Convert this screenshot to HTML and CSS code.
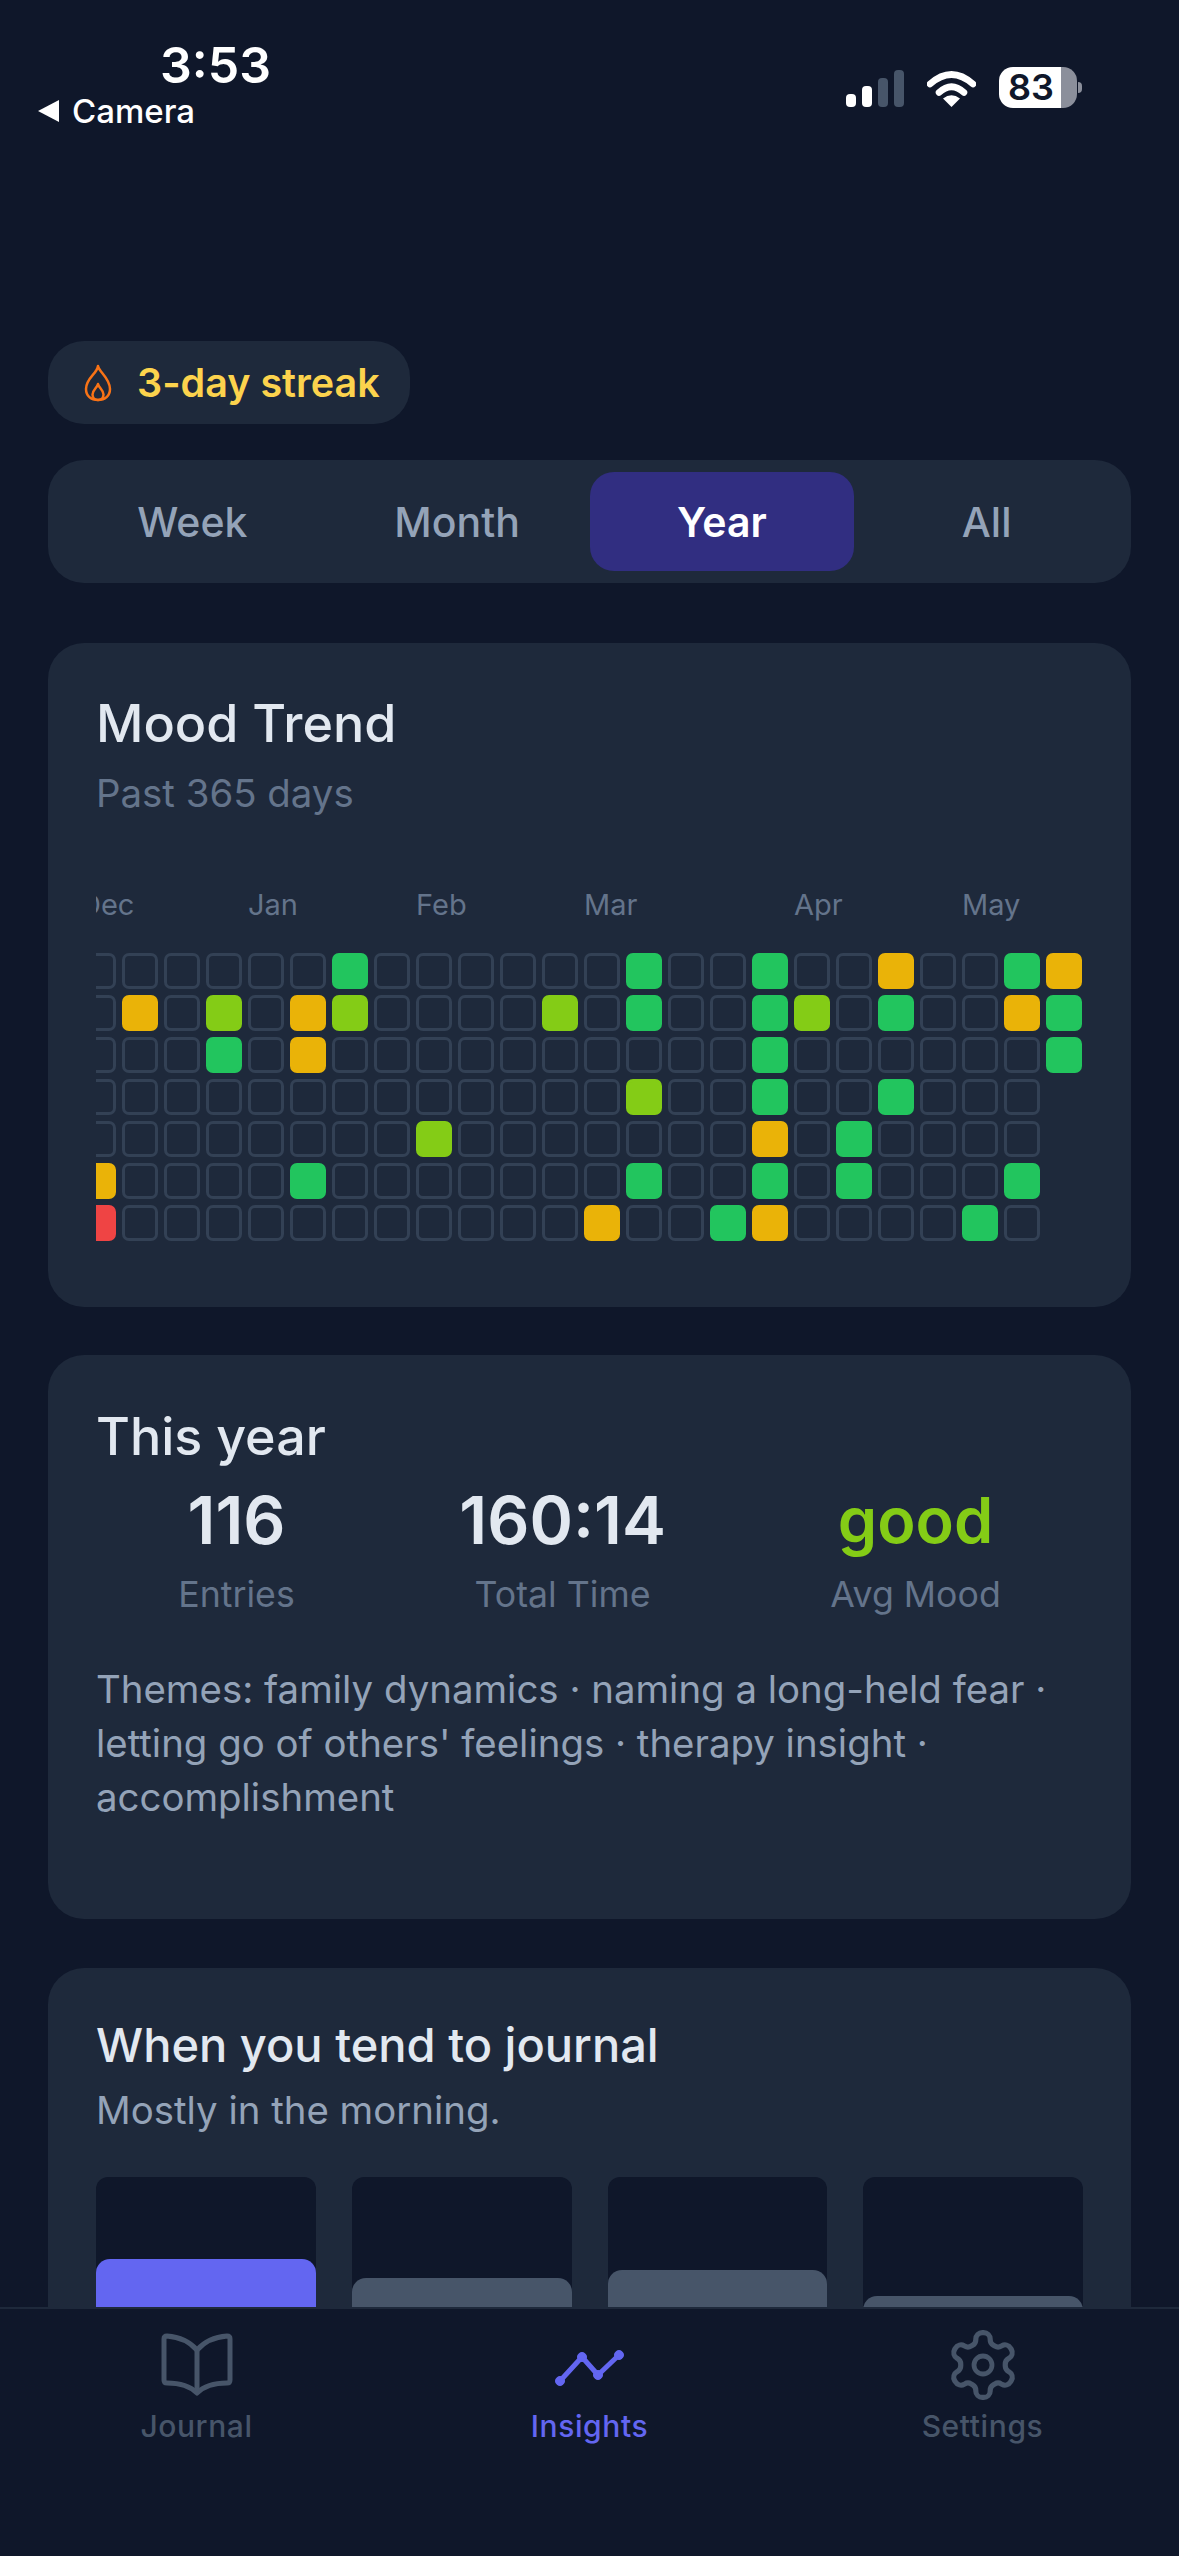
FILE: index.html
```html
<!DOCTYPE html>
<html lang="en">
<head>
<meta charset="utf-8">
<title>Insights</title>
<link rel="stylesheet" href="styles.css">
</head>
<body>
<div class="app">
  <header class="status">
    <div class="status-left">
      <div class="time">3:53</div>
      <div class="back"><span class="back-arrow"></span><span>Camera</span></div>
    </div>
    <div class="status-right">
      <div class="signal"><i class="b1"></i><i class="b2"></i><i class="b3 off"></i><i class="b4 off"></i></div>
      <svg class="wifi" viewBox="0 0 49 37" width="49" height="37"><path d="M3 14Q24.500-5 46 14" fill="none" stroke="#fff" stroke-width="6.500" stroke-linecap="round"/><path d="M12 22.500Q24.500 11 37 22.500" fill="none" stroke="#fff" stroke-width="6.500" stroke-linecap="round"/><path d="M24.500 37L16 28.500Q24.500 22 33 28.500Z" fill="#fff"/></svg>
      <div class="battery">83</div>
    </div>
  </header>

  <main class="main">
    <div class="streak">
      <svg class="flame" viewBox="0 0 28 38" width="28" height="38"><path d="M14 2C15 8 26 14 26 25C26 32 21 36 14 36C7 36 2 32 2 25C2 14 13 10 14 2Z" fill="none" stroke="#f97316" stroke-width="2.500" stroke-linejoin="round"/><path d="M14 20C15 24 19.500 26 19.500 30.500C19.500 34 17 36 14 36C11 36 8.500 34 8.500 30.500C8.500 26 13 24 14 20Z" fill="none" stroke="#f97316" stroke-width="2.500" stroke-linejoin="round"/></svg>
      <span>3-day streak</span>
    </div>

    <nav class="segments">
      <div class="seg">Week</div>
      <div class="seg">Month</div>
      <div class="seg active">Year</div>
      <div class="seg">All</div>
    </nav>

    <section class="card card-trend">
      <h2 class="title">Mood Trend</h2>
      <p class="sub sub-dim">Past 365 days</p>
      <div class="heat">
        <div class="heat-inner">
          <div class="months">
            <span class="s4">Dec</span><span class="s4">Jan</span><span class="s4">Feb</span><span class="s5">Mar</span><span class="s4">Apr</span><span class="s3">May</span>
          </div>
          <div class="cells">
            <i></i><i></i><i></i><i></i><i></i><i class="a"></i><i class="r"></i>
            <i></i><i class="a"></i><i></i><i></i><i></i><i></i><i></i>
            <i></i><i></i><i></i><i></i><i></i><i></i><i></i>
            <i></i><i class="l"></i><i class="g"></i><i></i><i></i><i></i><i></i>
            <i></i><i></i><i></i><i></i><i></i><i></i><i></i>
            <i></i><i class="a"></i><i class="a"></i><i></i><i></i><i class="g"></i><i></i>
            <i class="g"></i><i class="l"></i><i></i><i></i><i></i><i></i><i></i>
            <i></i><i></i><i></i><i></i><i></i><i></i><i></i>
            <i></i><i></i><i></i><i></i><i class="l"></i><i></i><i></i>
            <i></i><i></i><i></i><i></i><i></i><i></i><i></i>
            <i></i><i></i><i></i><i></i><i></i><i></i><i></i>
            <i></i><i class="l"></i><i></i><i></i><i></i><i></i><i></i>
            <i></i><i></i><i></i><i></i><i></i><i></i><i class="a"></i>
            <i class="g"></i><i class="g"></i><i></i><i class="l"></i><i></i><i class="g"></i><i></i>
            <i></i><i></i><i></i><i></i><i></i><i></i><i></i>
            <i></i><i></i><i></i><i></i><i></i><i></i><i class="g"></i>
            <i class="g"></i><i class="g"></i><i class="g"></i><i class="g"></i><i class="a"></i><i class="g"></i><i class="a"></i>
            <i></i><i class="l"></i><i></i><i></i><i></i><i></i><i></i>
            <i></i><i></i><i></i><i></i><i class="g"></i><i class="g"></i><i></i>
            <i class="a"></i><i class="g"></i><i></i><i class="g"></i><i></i><i></i><i></i>
            <i></i><i></i><i></i><i></i><i></i><i></i><i></i>
            <i></i><i></i><i></i><i></i><i></i><i></i><i class="g"></i>
            <i class="g"></i><i class="a"></i><i></i><i></i><i></i><i class="g"></i><i></i>
            <i class="a"></i><i class="g"></i><i class="g"></i>
          </div>
        </div>
      </div>
    </section>

    <section class="card card-year">
      <h2 class="title">This year</h2>
      <div class="stats">
        <div class="stat"><div class="value">116</div><div class="label">Entries</div></div>
        <div class="stat"><div class="value">160:14</div><div class="label">Total Time</div></div>
        <div class="stat"><div class="value good">good</div><div class="label">Avg Mood</div></div>
      </div>
      <p class="themes">Themes: family dynamics · naming a long-held fear · letting go of others' feelings · therapy insight · accomplishment</p>
    </section>

    <section class="card card-when">
      <h2 class="title title-small">When you tend to journal</h2>
      <p class="sub">Mostly in the morning.</p>
      <div class="bars">
        <div class="track"><div class="fill top" style="height:78px"></div></div>
        <div class="track"><div class="fill" style="height:59px"></div></div>
        <div class="track"><div class="fill" style="height:67px"></div></div>
        <div class="track"><div class="fill" style="height:41px"></div></div>
      </div>
    </section>
  </main>

  <footer class="tabbar">
    <div class="tab">
      <svg class="tab-icon" viewBox="0 0 72 72" width="72" height="72" fill="none" stroke="#475569" stroke-width="5" stroke-linejoin="round"><path d="M36 21C29 13 18 8 6 7Q3 7 3 10V51Q3 54 6 54C18 54 29 57 36 64C43 57 54 54 66 54Q69 54 69 51V10Q69 7 66 7C54 8 43 13 36 21Z"/><path d="M36 21V62"/></svg>
      <span>Journal</span>
    </div>
    <div class="tab tab-on">
      <svg class="tab-icon" viewBox="0 0 72 72" width="72" height="72" fill="#6366f1" stroke="#6366f1"><path d="M6 52L28 28L44 46L65 26" fill="none" stroke-width="5" stroke-linejoin="round"/><circle cx="6" cy="52" r="4.500"/><circle cx="28" cy="28" r="4.500"/><circle cx="44" cy="46" r="4.500"/><circle cx="65" cy="26" r="4.500"/></svg>
      <span>Insights</span>
    </div>
    <div class="tab">
      <svg class="tab-icon" viewBox="0 0 24 24" width="72" height="72" fill="none" stroke="#475569" stroke-width="1.600" stroke-linejoin="round"><path transform="translate(12 12) scale(1.08) translate(-12 -12)" d="M12.220 2h-.44a2 2 0 0 0-2 2v.18a2 2 0 0 1-1 1.730l-.43.25a2 2 0 0 1-2 0l-.15-.08a2 2 0 0 0-2.730.73l-.22.38a2 2 0 0 0 .73 2.730l.15.1a2 2 0 0 1 1 1.720v.51a2 2 0 0 1-1 1.740l-.15.09a2 2 0 0 0-.73 2.730l.22.38a2 2 0 0 0 2.730.73l.15-.08a2 2 0 0 1 2 0l.43.25a2 2 0 0 1 1 1.730V20a2 2 0 0 0 2 2h.44a2 2 0 0 0 2-2v-.18a2 2 0 0 1 1-1.730l.43-.25a2 2 0 0 1 2 0l.15.08a2 2 0 0 0 2.730-.73l.22-.39a2 2 0 0 0-.73-2.730l-.15-.08a2 2 0 0 1-1-1.740v-.5a2 2 0 0 1 1-1.740l.15-.09a2 2 0 0 0 .73-2.730l-.22-.38a2 2 0 0 0-2.730-.73l-.15.08a2 2 0 0 1-2 0l-.43-.25a2 2 0 0 1-1-1.730V4a2 2 0 0 0-2-2z"/><circle cx="12" cy="12" r="3"/></svg>
      <span>Settings</span>
    </div>
  </footer>
</div>
</body>
</html>
```

FILE: styles.css
```css
* { box-sizing: border-box; }
html, body { margin: 0; padding: 0; background: #0f172a; }
body { font-family: "Inter", "Liberation Sans", sans-serif; }
.app { width: 1179px; height: 2556px; display: flex; flex-direction: column; overflow: hidden; background: #0f172a; }

/* status bar */
.status { height: 130px; flex: none; display: flex; justify-content: space-between; align-items: flex-start; padding: 36px 102px 0 38px; color: #fff; }
.status-left { display: flex; flex-direction: column; }
.time { font-size: 50px; font-weight: 600; line-height: 58px; margin-left: 122px; }
.back { display: flex; align-items: center; gap: 13px; font-size: 33px; font-weight: 500; line-height: 40px; margin-top: -3px; }
.back-arrow { width: 0; height: 0; border-style: solid; border-width: 11px 21px 11px 0; border-color: transparent #fff transparent transparent; }
.status-right { display: flex; align-items: flex-end; margin-top: 31px; }
.signal { display: flex; align-items: flex-end; gap: 6px; height: 37px; margin-right: 23px; margin-bottom: 1px; }
.signal i { display: block; width: 10px; border-radius: 4px; background: #fff; }
.signal .b1 { height: 13px; }
.signal .b2 { height: 21px; }
.signal .b3 { height: 29px; }
.signal .b4 { height: 37px; }
.signal .off { background: #475569; }
.wifi { display: block; margin-right: 23px; margin-bottom: 1px; }
.battery { position: relative; width: 78px; height: 41px; border-radius: 14px; background: linear-gradient(90deg, #fff 0 62px, #8b8f9b 62px); color: #0f172a; font-size: 36px; font-weight: 600; line-height: 41px; padding-left: 9px; }
.battery::after { content: ""; position: absolute; left: 79px; top: 15px; width: 4px; height: 11px; border-radius: 0 6px 6px 0; background: #8b8f9b; }

/* main */
.main { flex: 1; min-height: 0; overflow: hidden; padding: 211px 48px 0; }
.streak { display: inline-flex; align-items: center; gap: 25px; height: 83px; width: 362px; padding-left: 36px; border-radius: 36px; background: #1e293b; color: #fcd34d; font-size: 39.5px; font-weight: 600; vertical-align: top; }
.flame { display: block; flex: none; }
.segments { display: grid; grid-template-columns: repeat(4, 1fr); height: 123px; padding: 12px; margin-top: 36px; border-radius: 36px; background: #1e293b; }
.seg { display: flex; align-items: center; justify-content: center; border-radius: 24px; color: #94a3b8; font-size: 41px; font-weight: 500; }
.seg.active { background: #312e81; color: #fff; font-weight: 600; }

/* cards */
.card { border-radius: 36px; background: #1e293b; padding: 0 48px; }
.card-trend { margin-top: 60px; height: 664px; padding-top: 48px; }
.card-year { margin-top: 48px; height: 564px; padding-top: 49px; }
.card-when { margin-top: 49px; padding-top: 44px; height: 500px; }
.title { margin: 0; color: #e2e8f0; font-size: 52px; font-weight: 550; line-height: 66px; }
.title-small { font-size: 47px; }
.sub { margin: 5px 0 0; color: #94a3b8; font-size: 38.4px; line-height: 54px; }
.sub-dim { margin-top: 9px; color: #64748b; }

/* heat map */
.heat { margin-top: 65px; overflow: hidden; }
.heat-inner { margin-left: -16px; width: 1002px; }
.months { display: grid; grid-template-columns: repeat(24, 36px); column-gap: 6px; height: 40px; color: #64748b; font-size: 29px; line-height: 40px; }
.months span { white-space: nowrap; }
.s3 { grid-column: span 3; }
.s4 { grid-column: span 4; }
.s5 { grid-column: span 5; }
.cells { display: grid; grid-auto-flow: column; grid-template-rows: repeat(7, 36px); grid-auto-columns: 36px; gap: 6px; margin-top: 28px; }
.cells i { display: block; border: 3px solid #334155; border-radius: 7px; }
.cells .g { background: #22c55e; border-color: #22c55e; }
.cells .l { background: #84cc16; border-color: #84cc16; }
.cells .a { background: #eab308; border-color: #eab308; }
.cells .r { background: #ef4444; border-color: #ef4444; }

/* stats */
.stats { display: flex; justify-content: space-around; margin-top: 11px; }
.stat { text-align: center; }
.value { color: #e2e8f0; font-size: 66px; font-weight: 600; line-height: 78px; }
.value.good { color: #84cc16; font-size: 63px; }
.label { margin-top: 13px; color: #64748b; font-size: 35.7px; line-height: 44px; }
.themes { margin: 46px 0 0; color: #94a3b8; font-size: 38.4px; line-height: 54px; }

/* bars */
.bars { display: grid; grid-template-columns: repeat(4, 1fr); gap: 36px; margin-top: 40px; }
.track { display: flex; align-items: flex-end; height: 160px; border-radius: 12px; background: #0f172a; }
.fill { width: 100%; border-radius: 14px; background: #475569; }
.fill.top { background: #6366f1; }

/* tab bar */
.tabbar { flex: none; height: 249px; display: grid; grid-template-columns: repeat(3, 1fr); align-items: start; border-top: 2px solid #1e293b; background: #0f172a; padding-top: 20px; }
.tab { display: flex; flex-direction: column; align-items: center; color: #475569; font-size: 30px; font-weight: 500; line-height: 40px; letter-spacing: 0.6px; }
.tab-on { color: #6366f1; }
.tab-icon { display: block; margin-bottom: 5px; }
```
